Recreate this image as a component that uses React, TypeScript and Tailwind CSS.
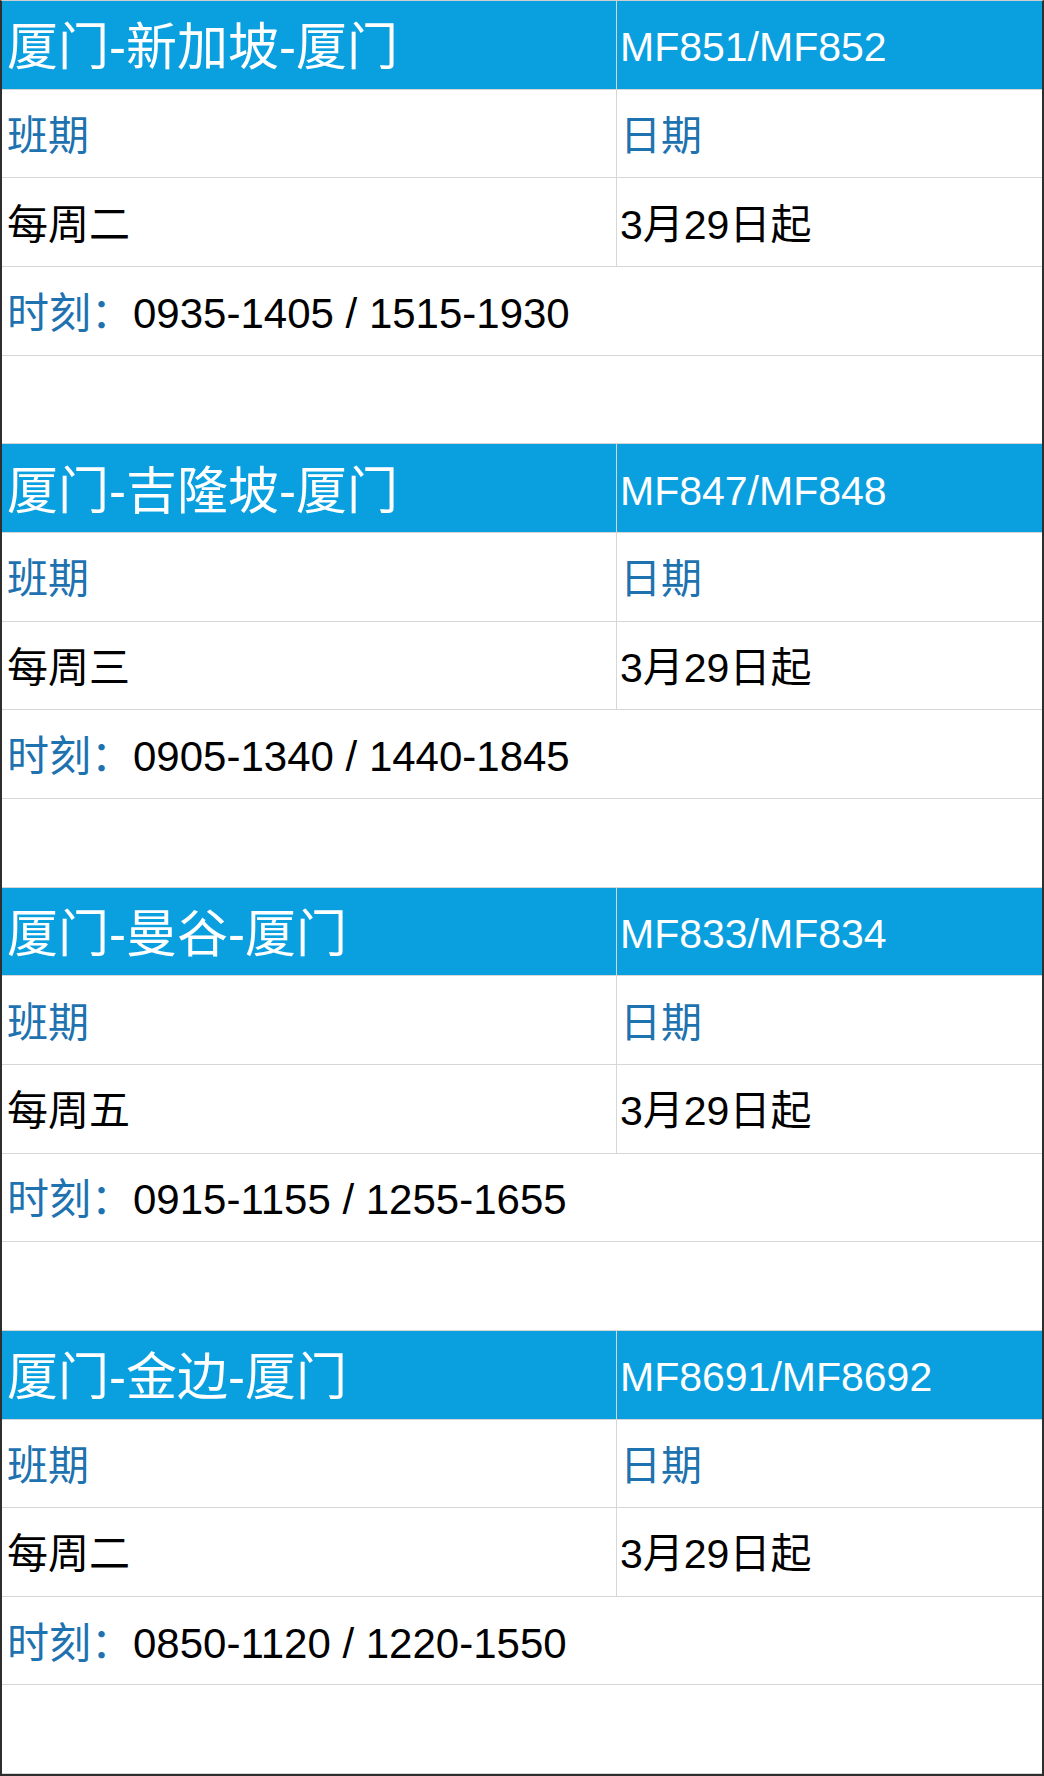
import React from "react";

type Route = {
  title: string;
  code: string;
  days: string;
  date: string;
  times: string;
};

const routes: Route[] = [
  { title: "厦门-新加坡-厦门", code: "MF851/MF852", days: "每周二", date: "3月29日起", times: "0935-1405 / 1515-1930" },
  { title: "厦门-吉隆坡-厦门", code: "MF847/MF848", days: "每周三", date: "3月29日起", times: "0905-1340 / 1440-1845" },
  { title: "厦门-曼谷-厦门", code: "MF833/MF834", days: "每周五", date: "3月29日起", times: "0915-1155 / 1255-1655" },
  { title: "厦门-金边-厦门", code: "MF8691/MF8692", days: "每周二", date: "3月29日起", times: "0850-1120 / 1220-1550" },
];

const font = { fontFamily: '"Liberation Sans", "Noto Sans CJK SC", sans-serif' };

function Row({ left, right, blue }: { left: React.ReactNode; right?: React.ReactNode; blue?: boolean }) {
  return (
    <div className={`flex flex-1 border-b border-[#d6d6d6] ${blue ? "bg-[#0aa0e0]" : "bg-white"}`}>
      <div className={`flex items-center pl-[5px] pt-[6px] ${right === undefined ? "flex-1" : "w-[615px] border-r border-[#d6d6d6]"}`}>
        {left}
      </div>
      {right !== undefined && <div className="flex flex-1 items-center pl-[3px] pt-[6px]">{right}</div>}
    </div>
  );
}

export default function App() {
  return (
    <div
      className="flex h-[1776px] w-[1044px] flex-col border-x-2 border-b-2 border-t border-x-[#2e2e2e] border-b-[#2e2e2e] border-t-[#cfcfcf]"
      style={font}
    >
      {routes.map((r, i) => (
        <React.Fragment key={i}>
          <Row
            blue
            left={<span className="text-[51px] leading-none text-white">{r.title}</span>}
            right={<span className="text-[41px] leading-none text-white">{r.code}</span>}
          />
          <Row
            left={<span className="text-[41px] leading-none text-[#1e72b0]">班期</span>}
            right={<span className="text-[41px] leading-none text-[#1e72b0]">日期</span>}
          />
          <Row
            left={<span className="text-[41px] leading-none text-black">{r.days}</span>}
            right={<span className="text-[41px] leading-none text-black">{r.date}</span>}
          />
          <Row
            left={
              <span className="text-[42px] leading-none">
                <span className="text-[#1e72b0]">时刻：</span>
                <span className="text-black">{r.times}</span>
              </span>
            }
          />
          <Row left={<span />} />
        </React.Fragment>
      ))}
    </div>
  );
}
